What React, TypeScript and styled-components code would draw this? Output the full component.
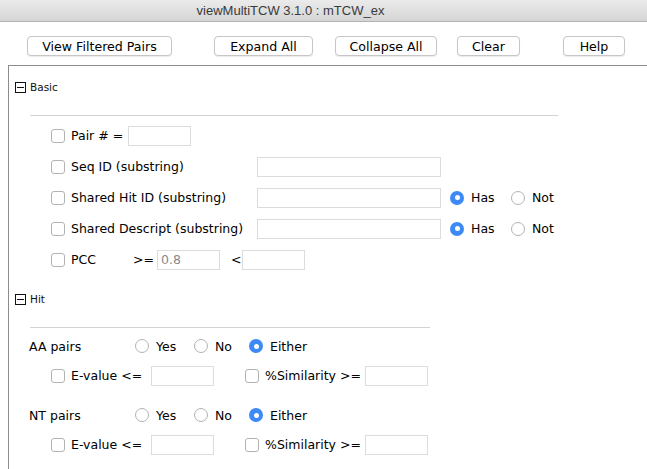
import React from "react";
import styled, { createGlobalStyle } from "styled-components";

const GlobalStyle = createGlobalStyle`
  html, body {
    margin: 0;
    padding: 0;
    background: #ffffff;
  }
  body {
    font-family: "DejaVu Sans", "Open Sans", sans-serif;
    color: #000;
    overflow: hidden;
  }
`;

const App = () => {
  return (
    <Window>
      <GlobalStyle />
      <TitleBar>viewMultiTCW 3.1.0 : mTCW_ex</TitleBar>
      <Toolbar>
        <Button left={27} w={145}>View Filtered Pairs</Button>
        <Button left={42} w={99}>Expand All</Button>
        <Button left={22} w={102}>Collapse All</Button>
        <Button left={20} w={63}>Clear</Button>
        <Button left={43} w={62}>Help</Button>
      </Toolbar>

      <Panel>
        <SectionHeader>
          <MinusBox />
          <SectionName>Basic</SectionName>
        </SectionHeader>
        <Separator w={528} />
        <Rows>
          <Row>
            <Check />
            <Label w={57}>Pair # =</Label>
            <Field w={63} />
          </Row>
          <Row>
            <Check />
            <Label w={186}>Seq ID (substring)</Label>
            <Field w={184} />
          </Row>
          <Row>
            <Check />
            <Label w={186}>Shared Hit ID (substring)</Label>
            <Field w={184} />
            <RadioGroup>
              <Radio checked />
              <Label w={40}>Has</Label>
              <Radio />
              <Label>Not</Label>
            </RadioGroup>
          </Row>
          <Row>
            <Check />
            <Label w={186}>Shared Descript (substring)</Label>
            <Field w={184} />
            <RadioGroup>
              <Radio checked />
              <Label w={40}>Has</Label>
              <Radio />
              <Label>Not</Label>
            </RadioGroup>
          </Row>
          <Row>
            <Check />
            <Label w={62}>PCC</Label>
            <Label w={24}>&gt;=</Label>
            <Field w={63} value="0.8" readOnly />
            <Label w={11} style={{ marginLeft: 11 }}>&lt;</Label>
            <Field w={63} />
          </Row>
        </Rows>

        <SectionHeader top={17}>
          <MinusBox />
          <SectionName>Hit</SectionName>
        </SectionHeader>
        <Separator w={400} />

        <PairRow>
          <PairLabel>AA pairs</PairLabel>
          <Radio />
          <Label w={38}>Yes</Label>
          <Radio />
          <Label w={34}>No</Label>
          <Radio checked />
          <Label>Either</Label>
        </PairRow>
        <Row h={29}>
          <Check />
          <Label w={80}>E-value &lt;=</Label>
          <Field w={63} />
          <Check gapLeft={31} />
          <Label w={100}>%Similarity &gt;=</Label>
          <Field w={63} />
        </Row>

        <PairRow top={10}>
          <PairLabel>NT pairs</PairLabel>
          <Radio />
          <Label w={38}>Yes</Label>
          <Radio />
          <Label w={34}>No</Label>
          <Radio checked />
          <Label>Either</Label>
        </PairRow>
        <Row h={29}>
          <Check />
          <Label w={80}>E-value &lt;=</Label>
          <Field w={63} />
          <Check gapLeft={31} />
          <Label w={100}>%Similarity &gt;=</Label>
          <Field w={63} />
        </Row>
      </Panel>
    </Window>
  );
};

export default App;

const Window = styled.div`
  width: 647px;
  height: 469px;
  background: #ffffff;
  overflow: hidden;
`;

const TitleBar = styled.div`
  height: 22px;
  box-sizing: border-box;
  border-bottom: 1px solid #b2b2b2;
  background: linear-gradient(#ebebeb, #d5d5d5);
  font-family: "Liberation Sans", Arial, sans-serif;
  font-size: 13px;
  color: #3a3a3a;
  display: flex;
  align-items: center;
  justify-content: center;
  padding-right: 66px;
`;

const Toolbar = styled.div`
  display: flex;
  align-items: flex-start;
  height: 43px;
  box-sizing: border-box;
  padding-top: 14px;
`;

const Button = styled.button<{ left: number; w: number }>`
  margin-left: ${(p) => p.left}px;
  width: ${(p) => p.w}px;
  height: 20px;
  padding: 0;
  background: #ffffff;
  border: 1px solid #c6c6c6;
  border-radius: 4px;
  box-shadow: 0 1px 1px rgba(0, 0, 0, 0.08);
  font-family: "DejaVu Sans", sans-serif;
  font-size: 12.6px;
  color: #000;
`;

const Panel = styled.div`
  margin-left: 8px;
  border-top: 1px solid #8c8c8c;
  border-left: 1px solid #8c8c8c;
  height: 420px;
  padding-top: 14px;
  box-sizing: border-box;
`;

const SectionHeader = styled.div<{ top?: number }>`
  display: flex;
  align-items: center;
  height: 14px;
  margin-top: ${(p) => p.top ?? 0}px;
  padding-left: 6px;
`;

const MinusBox = styled.span`
  width: 11px;
  height: 11px;
  box-sizing: border-box;
  border: 1px solid #111;
  position: relative;
  margin-right: 4px;

  &::after {
    content: "";
    position: absolute;
    left: 1px;
    right: 1px;
    top: 4px;
    height: 1px;
    background: #111;
  }
`;

const SectionName = styled.span`
  font-size: 10.5px;
  color: #111;
`;

const Separator = styled.div<{ w: number }>`
  width: ${(p) => p.w}px;
  height: 1px;
  background: #d2d2d2;
  margin: 21px 0 0 21px;
`;

const Rows = styled.div`
  padding-top: 4px;
`;

const Row = styled.div<{ h?: number }>`
  display: flex;
  align-items: center;
  height: ${(p) => p.h ?? 31}px;
  padding-left: 42px;
`;

const PairRow = styled.div<{ top?: number }>`
  display: flex;
  align-items: center;
  height: 30px;
  margin-top: ${(p) => p.top ?? 3}px;
  padding-left: 20px;
`;

const PairLabel = styled.span`
  width: 106px;
  font-size: 12.5px;
`;

const Check = styled.span<{ gapLeft?: number }>`
  display: block;
  width: 14px;
  height: 14px;
  box-sizing: border-box;
  border: 1px solid #b3b3b3;
  border-radius: 3px;
  background: #fff;
  margin-left: ${(p) => p.gapLeft ?? 0}px;
  margin-right: 6px;
  flex-shrink: 0;
`;

const Label = styled.span<{ w?: number }>`
  font-size: 12.5px;
  white-space: nowrap;
  ${(p) => (p.w ? `width: ${p.w}px;` : "")}
  flex-shrink: 0;
`;

const Field = styled.input<{ w: number }>`
  width: ${(p) => p.w}px;
  height: 20px;
  box-sizing: border-box;
  border: 1px solid #dcdcdc;
  padding: 0 3px;
  font-family: "DejaVu Sans", sans-serif;
  font-size: 12.5px;
  color: #8a8a8a;
  outline: none;
  flex-shrink: 0;
`;

const RadioGroup = styled.div`
  display: flex;
  align-items: center;
  margin-left: 9px;
`;

const Radio = styled.span<{ checked?: boolean }>`
  width: 14px;
  height: 14px;
  box-sizing: border-box;
  border-radius: 50%;
  border: ${(p) => (p.checked ? "none" : "1px solid #b3b3b3")};
  background: ${(p) => (p.checked ? "#3d8af7" : "#fff")};
  margin-right: 7px;
  flex-shrink: 0;
  display: flex;
  align-items: center;
  justify-content: center;

  &::after {
    content: "";
    display: ${(p) => (p.checked ? "block" : "none")};
    width: 5px;
    height: 5px;
    border-radius: 50%;
    background: #fff;
  }
`;
